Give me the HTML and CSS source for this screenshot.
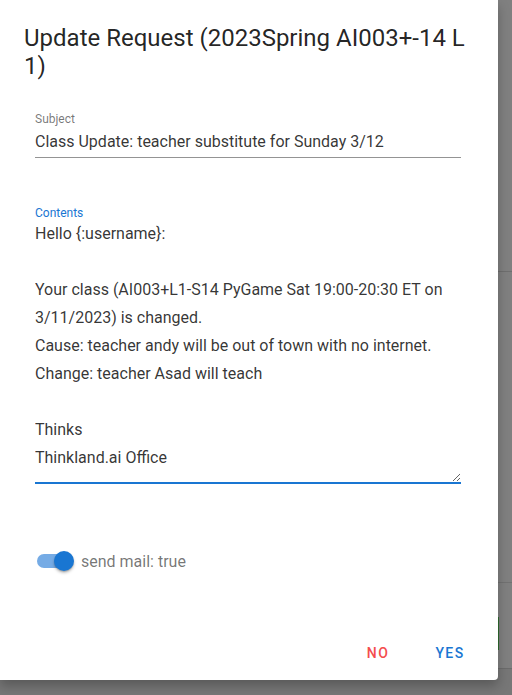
FILE: index.html
```html
<!DOCTYPE html>
<html>
<head>
<meta charset="utf-8">
<link rel="stylesheet" href="styles.css">
</head>
<body>
<div class="dialog">
  <h2 class="title">Update Request (2023Spring AI003+-14 L 1)</h2>
  <div class="content">
    <div class="field">
      <label class="label">Subject</label>
      <div class="input">Class Update: teacher substitute for Sunday 3/12</div>
    </div>
    <div class="field field-multiline">
      <label class="label label-focused">Contents</label>
      <textarea class="textarea" readonly>Hello {:username}:

Your class (AI003+L1-S14 PyGame Sat 19:00-20:30 ET on 3/11/2023) is changed.
Cause: teacher andy will be out of town with no internet.
Change: teacher Asad will teach

Thinks
Thinkland.ai Office</textarea>
    </div>
    <div class="switch-row">
      <span class="switch">
        <span class="switch-track"></span>
        <span class="switch-thumb"></span>
      </span>
      <span class="switch-label">send mail: true</span>
    </div>
  </div>
  <div class="actions">
    <button class="btn btn-no">NO</button>
    <button class="btn btn-yes">YES</button>
  </div>
</div>
</body>
</html>
```

FILE: styles.css
```css
html, body {
  margin: 0;
  padding: 0;
}
body {
  width: 512px;
  height: 695px;
  overflow: hidden;
  font-family: Roboto, "Liberation Sans", sans-serif;
  background-color: #808080;
  background-image:
    linear-gradient(#6f6f6f, #6f6f6f),
    linear-gradient(#727272, #727272),
    linear-gradient(#6c6c6c, #6c6c6c),
    linear-gradient(#2e6b2e, #2e6b2e),
    linear-gradient(#777777, #777777);
  background-size: 14px 1px, 14px 1px, 14px 1px, 1px 33px, 512px 28px;
  background-position: 498px 271px, 498px 582px, 498px 668px, 498px 617px, 0 669px;
  background-repeat: no-repeat;
}
.dialog {
  width: 498px;
  height: 680px;
  box-sizing: border-box;
  background: #fff;
  border-radius: 0 0 4px 0;
  box-shadow: 0 6px 12px rgba(0,0,0,0.25);
  display: flex;
  flex-direction: column;
}
.title {
  margin: 0;
  padding: 24px 24px 0 24px;
  font-size: 24px;
  line-height: 28px;
  font-weight: 400;
  color: rgba(0,0,0,0.87);
}
.content {
  padding: 0 37px 0 35px;
  display: flex;
  flex-direction: column;
}
.field {
  display: flex;
  flex-direction: column;
}
.label {
  font-size: 12px;
  line-height: 14px;
  color: rgba(0,0,0,0.54);
}
.field:first-child {
  margin-top: 32px;
}
.input {
  font-size: 16px;
  line-height: 19px;
  padding: 6px 0 6px 0;
  color: rgba(0,0,0,0.8);
  border-bottom: 1px solid rgba(0,0,0,0.42);
}
.field-multiline {
  margin-top: 48px;
}
.label-focused {
  color: #1976d2;
}
.textarea {
  display: block;
  width: 100%;
  box-sizing: border-box;
  height: 264px;
  margin: 0;
  padding: 0 0 12px 0;
  border: none;
  border-bottom: 2px solid #1976d2;
  outline: none;
  resize: vertical;
  font-family: Roboto, "Liberation Sans", sans-serif;
  font-size: 16px;
  line-height: 28px;
  color: rgba(0,0,0,0.8);
  background: transparent;
  overflow: hidden;
}
.switch-row {
  margin-top: 65px;
  display: flex;
  align-items: center;
  height: 24px;
}
.switch {
  position: relative;
  width: 38px;
  height: 24px;
  margin-left: 1px;
  flex: none;
}
.switch-track {
  position: absolute;
  left: 1px;
  top: 5px;
  width: 34px;
  height: 14px;
  border-radius: 7px;
  background: #75abe5;
}
.switch-thumb {
  position: absolute;
  left: 18px;
  top: 2px;
  width: 20px;
  height: 20px;
  border-radius: 50%;
  background: #1976d2;
  box-shadow: 0 2px 3px rgba(0,0,0,0.25), 0 1px 1px rgba(0,0,0,0.14);
}
.switch-label {
  margin-left: 7px;
  font-size: 16px;
  color: rgba(0,0,0,0.55);
}
.actions {
  margin-top: auto;
  display: flex;
  justify-content: flex-end;
  gap: 8px;
  padding: 0 16px 9px 0;
}
.btn {
  border: none;
  background: transparent;
  font-family: Roboto, "Liberation Sans", sans-serif;
  font-size: 14px;
  font-weight: 500;
  letter-spacing: 1.4px;
  line-height: 24px;
  padding: 6px 12px;
  min-width: 64px;
  cursor: pointer;
}
.btn-no {
  color: #f44d4d;
}
.btn-yes {
  color: #1976d2;
}
```
